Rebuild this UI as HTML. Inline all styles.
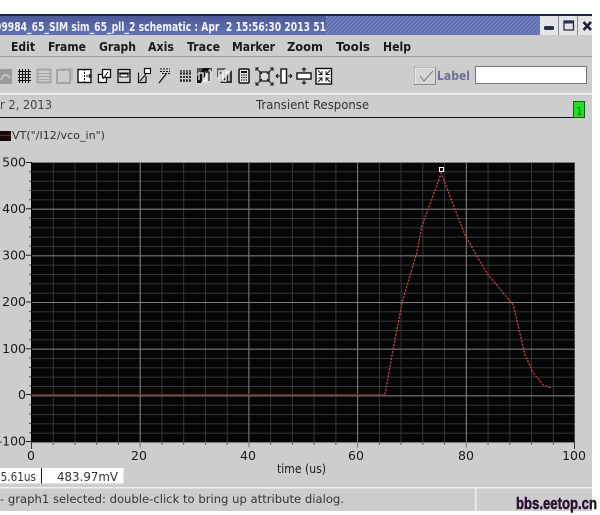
<!DOCTYPE html>
<html><head><meta charset="utf-8"><style>
html,body{margin:0;padding:0;background:#fff;width:600px;height:515px;overflow:hidden}
svg{display:block;filter:blur(.3px)}
text{font-family:"DejaVu Sans","Liberation Sans",sans-serif;fill:#1a1a1a}
</style></head><body>
<svg width="600" height="515" viewBox="0 0 600 515" xmlns="http://www.w3.org/2000/svg">
<defs>
<pattern id="minor" patternUnits="userSpaceOnUse" x="31" y="162" width="21.74" height="9.333"><path d="M0.5 0V9.333M0 .5H21.74" stroke="#363636" stroke-width="1" fill="none"/></pattern>
<pattern id="major" patternUnits="userSpaceOnUse" x="31" y="162" width="108.7" height="46.67"><path d="M0.5 0V46.67M0 .5H108.7" stroke="#7e7e7e" stroke-width="1" fill="none"/></pattern>
<pattern id="hatch" patternUnits="userSpaceOnUse" width="4" height="4"><rect width="4" height="4" fill="#5f6dae"/><path d="M-1 1L1 -1M0 4L4 0M3 5L5 3" stroke="#7c89c4" stroke-width="1"/></pattern>
<linearGradient id="tb" x1="0" y1="0" x2="0" y2="1"><stop offset="0" stop-color="#4a5897"/><stop offset="1" stop-color="#6472b2"/></linearGradient>
</defs>
<rect x="0" y="14" width="592" height="497" fill="#cdcdcd"/>
<!-- title bar -->
<rect x="0" y="14" width="592" height="21" fill="url(#tb)"/>
<rect x="326" y="16" width="214" height="19" fill="url(#hatch)"/>
<rect x="0" y="14" width="592" height="2" fill="#1c2450"/>
<text x="-5" y="31" font-size="12.5" font-weight="bold" style="fill:#f2f2f8" textLength="331" lengthAdjust="spacingAndGlyphs" xml:space="preserve">99984_65_SIM sim_65_pll_2 schematic : Apr  2 15:56:30 2013 51</text>
<rect x="540" y="16" width="52" height="19" fill="#e4e4e8"/>
<path d="M558.500 16V35M577.500 16V35" stroke="#8a8a90"/>
<rect x="544" y="26" width="10" height="4" rx="1.500" fill="#2a2f4a"/>
<rect x="564" y="21" width="9.500" height="9" fill="none" stroke="#2a2f4a" stroke-width="1.300"/><rect x="564" y="21" width="9.500" height="2.500" fill="#2a2f4a"/>
<path d="M583.500 22L591 30M591 22L583.500 30" stroke="#1c2038" stroke-width="2.600"/>
<!-- menu -->
<rect x="0" y="35" width="592" height="21" fill="#cdcdcd"/>
<rect x="0" y="56" width="592" height="1" fill="#9c9c9c"/>
<g font-size="12.500" font-weight="bold">
<text x="11" y="51" textLength="24" lengthAdjust="spacingAndGlyphs">Edit</text>
<text x="48" y="51" textLength="38" lengthAdjust="spacingAndGlyphs">Frame</text>
<text x="99" y="51" textLength="37" lengthAdjust="spacingAndGlyphs">Graph</text>
<text x="148" y="51" textLength="26" lengthAdjust="spacingAndGlyphs">Axis</text>
<text x="187" y="51" textLength="33" lengthAdjust="spacingAndGlyphs">Trace</text>
<text x="232" y="51" textLength="43" lengthAdjust="spacingAndGlyphs">Marker</text>
<text x="287" y="51" textLength="36" lengthAdjust="spacingAndGlyphs">Zoom</text>
<text x="336" y="51" textLength="34" lengthAdjust="spacingAndGlyphs">Tools</text>
<text x="383" y="51" textLength="28" lengthAdjust="spacingAndGlyphs">Help</text>
</g>
<!-- toolbar icons -->
<g fill="none" stroke="#111" stroke-width="1">
<rect x="0" y="69" width="12" height="15" fill="#9a9a9a" stroke="none"/>
<path d="M1 80Q5 71 10 78" stroke="#c4c4c4" stroke-width="2"/>
<path d="M18 71.500H31M18 74.500H31M18 77.500H31M18 80.500H31M19.500 69V83M22.500 69V83M25.500 69V83M28.500 69V83" stroke-width="1"/>
<rect x="37.500" y="69.500" width="13" height="13" stroke="#a4a4a4" stroke-width="2"/><path d="M38 73.500H50M38 76.500H50M38 79.500H50" stroke="#a4a4a4"/>
<rect x="57" y="70" width="13" height="13" stroke="#a4a4a4" stroke-width="2"/><path d="M60 69H72V80" stroke="#a4a4a4"/>
<rect x="78" y="69.500" width="13" height="13" fill="#fff" stroke-width="1.400"/><path d="M84.500 69V83" stroke-dasharray="2 1"/><path d="M86 76H91M89 74L91 76L89 78"/>
<rect x="98.500" y="74.500" width="8" height="8" fill="#fff" stroke-width="1.300"/><rect x="102.500" y="69.500" width="8" height="8" fill="#fff" stroke-width="1.300"/><path d="M103 79L108 72"/>
<rect x="118" y="69.500" width="12" height="13" fill="#ddd" stroke-width="1.300"/><rect x="120" y="74" width="8" height="3" fill="#fff"/><path d="M118 73H130"/>
<path d="M138.500 72.500V82.500H146V76" stroke-width="1.200"/><rect x="144.500" y="68.500" width="6" height="5" fill="#fff" stroke-width="1.200"/><path d="M140 81L146 74"/>
<path d="M160 69H170M160 71.500H170M162 73.500H170" stroke-dasharray="2 1"/><path d="M159 83L166 74" stroke-width="1.200"/>
<path d="M181 70V82M184 70V82M187 70V82M190 70V82M180 73H191M180 77H191M180 81H191" stroke-width="1.200" stroke-dasharray="2 1"/>
</g>
<rect x="197" y="68" width="15" height="15" fill="#d8d8d8"/>
<path d="M197 83V76L203 68H210L201 83Z" fill="#111"/>
<path d="M197 68H203L197 75ZM212 68V72L209 68Z" fill="#555"/>
<path d="M199 80V73H203V81H206V72H209V81" fill="none" stroke="#fff" stroke-width="1.200"/>
<path d="M206 72H209V81" fill="none" stroke="#111" stroke-width="1.200"/>
<rect x="217" y="68" width="15" height="15" fill="#cfcfcf"/>
<path d="M217 68H226L217 78Z" fill="#666"/><path d="M220 83L232 70V83Z" fill="#333"/>
<path d="M219 79V71H223V81H226V72H229V81" fill="none" stroke="#fff" stroke-width="1.200"/>
<g fill="none" stroke="#111" stroke-width="1.300">
<rect x="239" y="69" width="10" height="14" rx="1" fill="#eee" stroke-width="1.500"/>
<path d="M241 72H247" stroke-width="2"/><path d="M241 75H247M241 77.500H247M241 80H247" stroke-dasharray="1.400 .9"/>
<rect x="260" y="72" width="9" height="9" stroke-width="1.200" fill="#ddd"/>
<path d="M262 74L256 68M267 74L273 68M262 79L256 85M267 79L273 85M256 71V68H259M273 71V68H270M256 82V85H259M273 82V85H270" stroke-width="1"/>
<rect x="281" y="69" width="5.500" height="14" fill="#fff" stroke-width="1.400"/>
<path d="M280 76H276M278 74L276 76L278 78M288 76H292M290 74L292 76L290 78" stroke-width="1"/>
<rect x="297" y="73" width="14" height="6" fill="#fff" stroke-width="1.400"/>
<path d="M304 72V68M302 70L304 68L306 70M304 80V84M302 82L304 84L306 82" stroke-width="1"/>
<rect x="316" y="68.500" width="15.500" height="15.500" fill="#fff" stroke-width="1.400"/>
<path d="M318 70.500L322 74.500M322 71V74.500H318.500M330 70.500L326 74.500M326 71V74.500H329.500M318 82L322 78M322 81.500V78H318.500M330 82L326 78M326 81.500V78H329.500" stroke-width=".9"/>
</g>
<!-- label group -->
<rect x="414.500" y="67.500" width="21" height="17" fill="#d6d6d6" stroke="#8a8a8a"/>
<path d="M415 68H435M415 68V84" stroke="#f0f0f0" fill="none"/>
<path d="M420 76L424 81L433 71" fill="none" stroke="#77778c"/>
<text x="437" y="80" font-size="12" font-weight="bold" style="fill:#6f6f97" textLength="33" lengthAdjust="spacingAndGlyphs">Label</text>
<rect x="475.500" y="66.500" width="111" height="17" fill="#fff" stroke="#777"/>
<!-- header row -->
<rect x="0" y="93" width="592" height="1.500" fill="#f4f4f4"/>
<rect x="0" y="117" width="573" height="1" fill="#111"/>
<text x="0" y="109" font-size="12" textLength="52" lengthAdjust="spacingAndGlyphs" style="fill:#444">r 2, 2013</text>
<text x="256" y="109" font-size="12" textLength="113" lengthAdjust="spacingAndGlyphs" style="fill:#333">Transient Response</text>
<rect x="573.500" y="101.500" width="11" height="16" fill="#22dd22" stroke="#106010"/>
<text x="576" y="115" font-size="11" style="fill:#0a6a0a">1</text>
<!-- legend -->
<rect x="0" y="131" width="11" height="10" fill="#120808"/>
<path d="M0 135.500H11" stroke="#7a2020" stroke-width="1.300"/>
<text x="12" y="139" font-size="11" textLength="93" lengthAdjust="spacingAndGlyphs" style="fill:#333">VT("/I12/vco_in")</text>
<!-- plot -->
<rect x="31" y="162" width="544" height="280" fill="#050505"/>
<rect x="31" y="162" width="544" height="280" fill="url(#minor)"/>
<rect x="31" y="162" width="544" height="280" fill="url(#major)"/>
<rect x="31" y="162" width="1" height="280" fill="#000"/>
<!-- ticks -->
<rect x="31" y="442" width="544" height="2.500" fill="url(#minor)"/>
<rect x="31" y="442" width="544" height="5.500" fill="url(#major)"/>
<path d="M574.500 442V449M31.500 442V449" stroke="#333"/>
<path d="M29 162.500H31M29 171.800H31M29 181.200H31M29 190.500H31M29 199.800H31M29 218H31M29 227.400H31M29 236.700H31M29 246H31M29 265H31M29 274.300H31M29 283.600H31M29 293H31M29 311.600H31M29 321H31M29 330.300H31M29 339.600H31M29 358H31M29 367.500H31M29 376.800H31M29 386H31M29 404.800H31M29 414H31M29 423.500H31M29 432.800H31" stroke="#8a3a3a" fill="none"/>
<path d="M26 162.500H31M26 208.700H31M26 255.300H31M26 302H31M26 348.700H31M26 394.500H31M26 441.500H31" stroke="#222" fill="none"/>
<!-- curve -->
<path d="M385 394.500L393.300 348L402.300 301.700L416.700 253.300L421.700 226.700L433.300 195L441.300 173.300L453.300 205L465 235L486.700 273L513.300 305L525 355L533.300 373L543.300 385L551.700 388.300" fill="none" stroke="#c04444" stroke-width="1.300" stroke-dasharray="2.200 1.300"/>
<path d="M31 394.500H385" stroke="#6a2020" stroke-width="1.200"/>
<rect x="439.500" y="167.500" width="4" height="4" fill="none" stroke="#fff" stroke-width="1"/>
<!-- y labels -->
<g font-size="12.500" style="fill:#333" text-anchor="end">
<text x="26" y="166.500">500</text>
<text x="26" y="213">400</text>
<text x="26" y="259.500">300</text>
<text x="26" y="306">200</text>
<text x="26" y="353">100</text>
<text x="26" y="399">0</text>
<text x="26" y="445.500">-100</text>
</g>
<!-- x labels -->
<g font-size="12.500" text-anchor="middle" style="fill:#333">
<text x="31" y="460">0</text>
<text x="139" y="460">20</text>
<text x="248" y="460">40</text>
<text x="356" y="460">60</text>
<text x="466" y="460">80</text>
<text x="574" y="460">100</text>
<text x="301.500" y="473" textLength="49" lengthAdjust="spacingAndGlyphs">time (us)</text>
</g>
<!-- readout -->
<rect x="0" y="468" width="123.500" height="15.500" fill="#fff"/>
<rect x="41" y="468" width="1" height="15.500" fill="#111"/>
<text x="-6" y="481" font-size="12" textLength="42" lengthAdjust="spacingAndGlyphs" style="fill:#333">75.61us</text>
<text x="57" y="481" font-size="12" textLength="61" lengthAdjust="spacingAndGlyphs" style="fill:#333">483.97mV</text>
<!-- status -->
<rect x="0" y="487" width="592" height="1.500" fill="#f0f0f0"/>
<rect x="475" y="487" width="1.500" height="24" fill="#f0f0f0"/>
<text x="0" y="503" font-size="11.500" textLength="344" lengthAdjust="spacingAndGlyphs" style="fill:#333">- graph1 selected: double-click to bring up attribute dialog.</text>
<text x="516" y="509" font-size="17" font-weight="bold" textLength="81" lengthAdjust="spacingAndGlyphs" style="fill:#2b1030;font-family:'Liberation Sans',sans-serif;stroke:#2b1030;stroke-width:.5">bbs.eetop.cn</text>
</svg>
</body></html>
